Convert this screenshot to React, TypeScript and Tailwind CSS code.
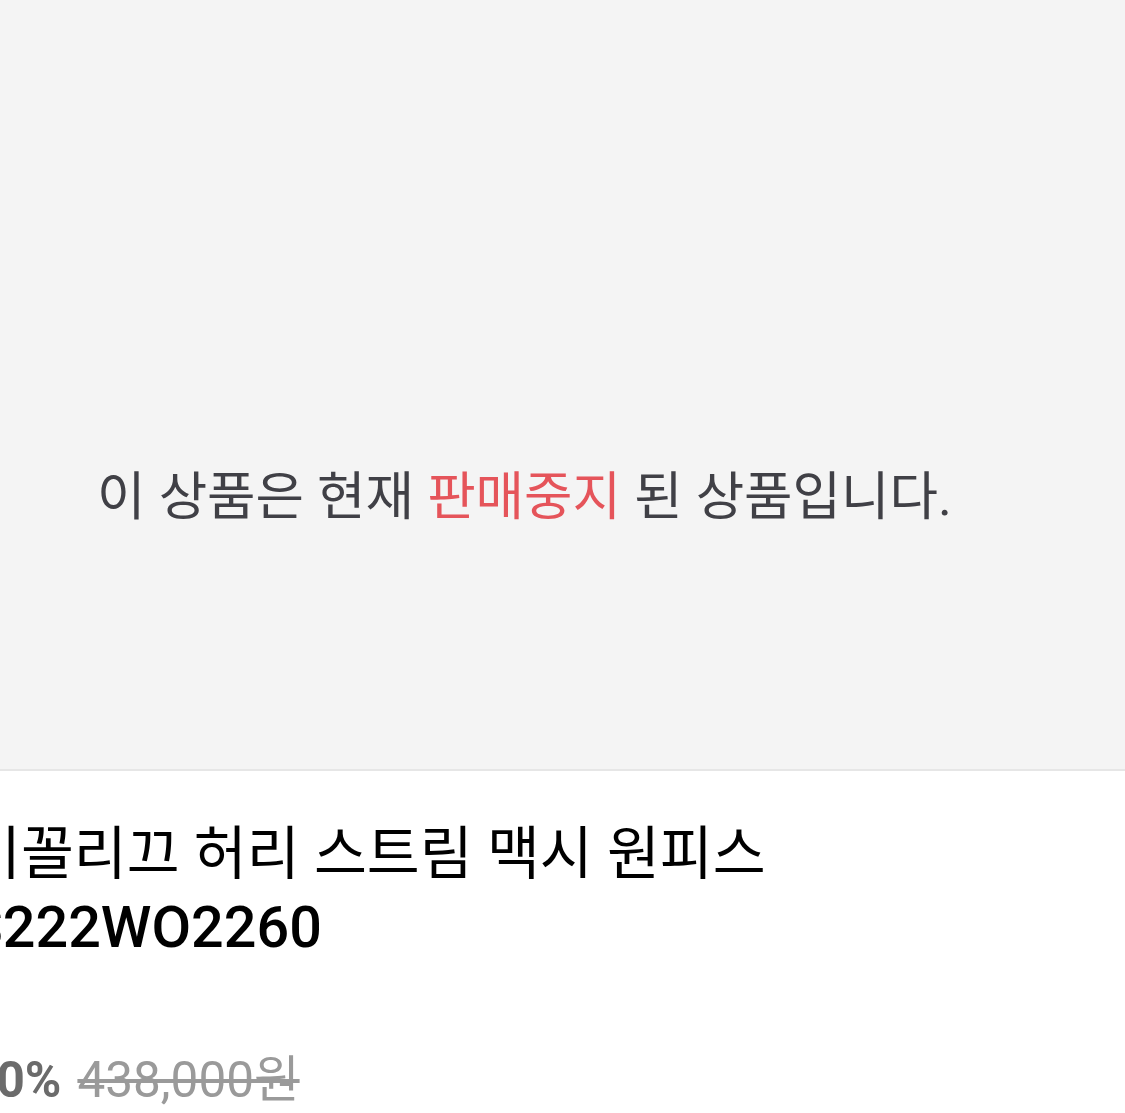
export default function App() {
  return (
    <div className="w-[1125px] h-[1113px] overflow-hidden bg-white font-['Roboto','Noto_Sans_CJK_KR',sans-serif]">
      <div className="-ml-[76px] w-[1201px]">
        <div className="h-[771px] bg-[#f4f4f4] flex justify-center pt-[457px] border-b-2 border-[#e6e6e6]">
          <p className="text-[52.7px] leading-[80px] text-[#404046]">
            이 상품은 현재 <span className="text-[#e5545a]">판매중지</span> 된 상품입니다.
          </p>
        </div>
        <div className="pl-[44px] pt-[50px]">
          <p className="text-[57.5px] leading-[68px] text-black">이꼴리끄 허리 스트림 맥시 원피스</p>
          <p className="mt-[5px] text-[57.5px] leading-[68px] text-black font-medium">S222WO2260</p>
          <div className="mt-[81px] flex items-baseline gap-4 text-[49.5px]">
            <span className="font-bold text-[#6b6b6b]">10%</span>
            <span className="line-through text-[#9a9a9a]">438,000원</span>
          </div>
        </div>
      </div>
    </div>
  )
}
